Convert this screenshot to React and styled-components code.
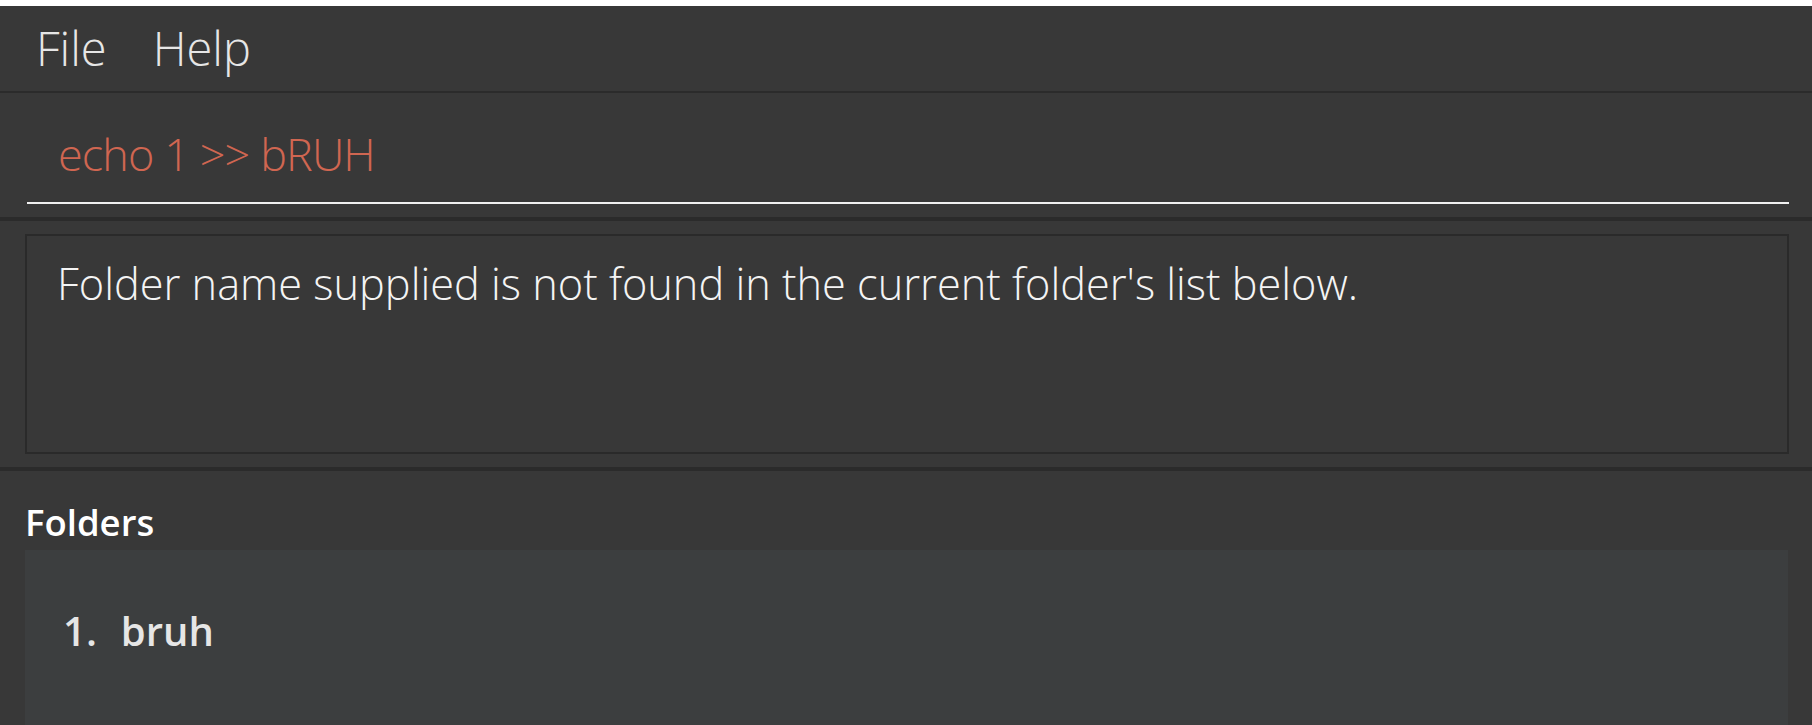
import React from "react";
import styled, { createGlobalStyle } from "styled-components";

const GlobalStyle = createGlobalStyle`
  html, body {
    margin: 0;
    padding: 0;
    background: #ffffff;
  }
  body {
    font-family: "Open Sans", "Noto Sans", sans-serif;
  }
`;

const Window = styled.div`
  margin-top: 6px;
  width: 1812px;
  height: 719px;
  background: #383838;
  display: flex;
  flex-direction: column;
  overflow: hidden;
`;

const MenuBar = styled.div`
  height: 85px;
  display: flex;
  align-items: center;
  padding-left: 36px;
  gap: 46px;
  background: #383838;
`;

const MenuItem = styled.span`
  font-family: "Open Sans", sans-serif;
  font-weight: 300;
  font-size: 47px;
  line-height: 1;
  color: #e6e6e6;
`;

const Divider = styled.div`
  height: ${(p) => p.$h}px;
  background: #2b2b2b;
  flex: none;
`;

const CommandPane = styled.div`
  height: 124px;
  padding: 0 23px 0 27px;
  display: flex;
  flex-direction: column;
  justify-content: flex-start;
`;

const CommandField = styled.div`
  margin-top: 38px;
  padding: 0 0 0 31px;
  height: 71px;
  border-bottom: 2px solid #f0f0f0;
  font-weight: 300;
  font-size: 45px;
  letter-spacing: -0.9px;
  line-height: 1;
  color: ${(p) => (p.$error ? "#d06651" : "#ffffff")};
  white-space: nowrap;
`;

const ResultPane = styled.div`
  height: 246px;
  padding: 13px 23px 0 25px;
  box-sizing: border-box;
`;

const ResultBox = styled.div`
  height: 220px;
  box-sizing: border-box;
  border: 2px solid #2a2a2a;
  padding: 26px 30px;
  font-weight: 300;
  font-size: 43.3px;
  line-height: 1;
  color: #f4f4f4;
`;

const FolderPane = styled.div`
  flex: 1;
  padding: 33px 24px 0 25px;
  display: flex;
  flex-direction: column;
`;

const SectionLabel = styled.div`
  font-weight: 600;
  font-size: 36.5px;
  line-height: 1;
  color: #ffffff;
  height: 46px;
`;

const List = styled.div`
  flex: 1;
  background: #3c3e3f;
`;

const ListCell = styled.div`
  display: flex;
  gap: 24px;
  padding: 61px 38px 0;
  font-weight: 600;
  font-size: 40px;
  line-height: 1;
  color: #e6e6e6;
`;

const folders = [{ id: 1, name: "bruh" }];

export default function App() {
  return (
    <>
      <GlobalStyle />
      <Window>
        <MenuBar>
          <MenuItem>File</MenuItem>
          <MenuItem>Help</MenuItem>
        </MenuBar>
        <Divider $h={2} />
        <CommandPane>
          <CommandField $error>echo 1 &gt;&gt; bRUH</CommandField>
        </CommandPane>
        <Divider $h={4} />
        <ResultPane>
          <ResultBox>
            Folder name supplied is not found in the current folder's list below.
          </ResultBox>
        </ResultPane>
        <Divider $h={4} />
        <FolderPane>
          <SectionLabel>Folders</SectionLabel>
          <List>
            {folders.map((f) => (
              <ListCell key={f.id}>
                <span>{f.id}.</span>
                <span>{f.name}</span>
              </ListCell>
            ))}
          </List>
        </FolderPane>
      </Window>
    </>
  );
}
